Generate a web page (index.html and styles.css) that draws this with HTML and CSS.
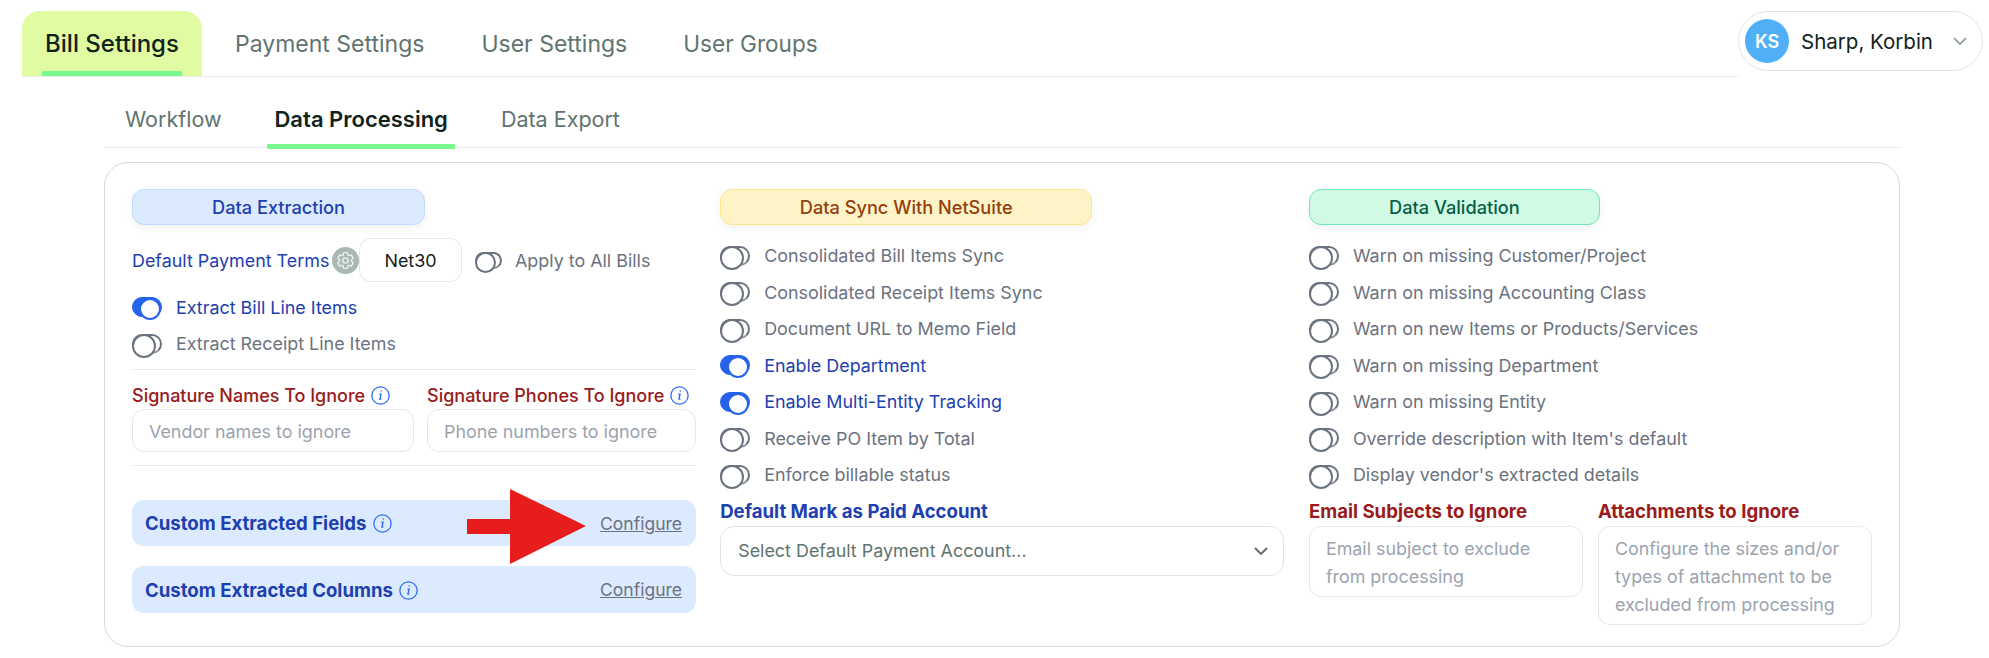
FILE: index.html
```html
<!DOCTYPE html>
<html lang="en">
<head>
  <meta charset="UTF-8">
  <meta name="viewport" content="width=device-width, initial-scale=1.0">
  <title>Bill Settings</title>
  <link rel="stylesheet" href="styles.css">
</head>
<body>
  <header class="topbar">
    <nav class="main-tabs">
      <a class="main-tab active">Bill Settings</a>
      <a class="main-tab">Payment Settings</a>
      <a class="main-tab">User Settings</a>
      <a class="main-tab">User Groups</a>
    </nav>
    <div class="user-chip">
      <span class="avatar">KS</span>
      <span class="user-name">Sharp, Korbin</span>
      <svg class="chevron" viewBox="0 0 14 8" width="14" height="8"><path d="M1 1l6 6 6-6" fill="none" stroke="#7d918c" stroke-width="1.5"/></svg>
    </div>
  </header>

  <main class="content">
    <nav class="sub-tabs">
      <a class="sub-tab">Workflow</a>
      <a class="sub-tab active">Data Processing</a>
      <a class="sub-tab">Data Export</a>
    </nav>

    <section class="card">
      <!-- Data extraction -->
      <div class="col">
        <h3 class="pill pill-blue">Data Extraction</h3>
        <div class="terms-row">
          <span class="terms-label">Default Payment Terms</span>
          <span class="gear">
            <svg viewBox="0 0 24 24" width="21" height="21" fill="none" stroke="#eef2f1" stroke-width="1.6" stroke-linejoin="round">
              <path d="M9.594 3.94c.09-.542.56-.94 1.11-.94h2.593c.55 0 1.02.398 1.11.94l.213 1.281c.063.374.313.686.645.87.074.04.147.083.22.127.325.196.72.257 1.075.124l1.217-.456a1.125 1.125 0 0 1 1.37.49l1.296 2.247a1.125 1.125 0 0 1-.26 1.431l-1.003.827c-.293.241-.438.613-.43.992a7.723 7.723 0 0 1 0 .255c-.008.378.137.75.43.991l1.004.827c.424.35.534.955.26 1.43l-1.298 2.247a1.125 1.125 0 0 1-1.369.491l-1.217-.456c-.355-.133-.75-.072-1.076.124a6.47 6.47 0 0 1-.22.128c-.331.183-.581.495-.644.869l-.213 1.281c-.09.543-.56.94-1.11.94h-2.594c-.55 0-1.019-.398-1.11-.94l-.213-1.281c-.062-.374-.312-.686-.644-.87a6.52 6.52 0 0 1-.22-.127c-.325-.196-.72-.257-1.076-.124l-1.217.456a1.125 1.125 0 0 1-1.369-.49l-1.297-2.247a1.125 1.125 0 0 1 .26-1.431l1.004-.827c.292-.24.437-.613.43-.991a6.932 6.932 0 0 1 0-.255c.007-.38-.138-.751-.43-.992l-1.004-.827a1.125 1.125 0 0 1-.26-1.43l1.297-2.247a1.125 1.125 0 0 1 1.37-.491l1.216.456c.356.133.751.072 1.076-.124.072-.044.146-.086.22-.128.332-.183.582-.495.644-.869l.214-1.28Z"/>
              <circle cx="12" cy="12" r="3"/>
            </svg>
          </span>
          <span class="terms-value">Net30</span>
          <span class="toggle small"></span>
          <span class="terms-apply">Apply to All Bills</span>
        </div>
        <div class="extract-rows">
          <div class="row on"><span class="toggle"></span>Extract Bill Line Items</div>
          <div class="row"><span class="toggle"></span>Extract Receipt Line Items</div>
        </div>
        <div class="signature-fields">
          <div class="field names">
            <label class="field-label">Signature Names To Ignore <svg class="info"><use href="#info"/></svg></label>
            <input class="text-input" placeholder="Vendor names to ignore">
          </div>
          <div class="field phones">
            <label class="field-label">Signature Phones To Ignore <svg class="info"><use href="#info"/></svg></label>
            <input class="text-input" placeholder="Phone numbers to ignore">
          </div>
        </div>
        <div class="custom-fields">
          <div class="custom-row">
            <span class="custom-title">Custom Extracted Fields <svg class="info"><use href="#info"/></svg></span>
            <a class="configure">Configure</a>
            <svg class="arrow" viewBox="0 0 119 75" width="119" height="75"><polygon points="0,30 43,30 43,0 119,37 43,75 43,45 0,45" fill="#e71d1d"/></svg>
          </div>
          <div class="custom-row tall">
            <span class="custom-title">Custom Extracted Columns <svg class="info"><use href="#info"/></svg></span>
            <a class="configure">Configure</a>
          </div>
        </div>
      </div>

      <!-- Sync -->
      <div class="col">
        <h3 class="pill pill-yellow">Data Sync With NetSuite</h3>
        <div class="toggle-list">
          <div class="row"><span class="toggle"></span>Consolidated Bill Items Sync</div>
          <div class="row"><span class="toggle"></span>Consolidated Receipt Items Sync</div>
          <div class="row"><span class="toggle"></span>Document URL to Memo Field</div>
          <div class="row on"><span class="toggle"></span>Enable Department</div>
          <div class="row on"><span class="toggle"></span>Enable Multi-Entity Tracking</div>
          <div class="row"><span class="toggle"></span>Receive PO Item by Total</div>
          <div class="row"><span class="toggle"></span>Enforce billable status</div>
        </div>
        <label class="bold-label blue">Default Mark as Paid Account</label>
        <div class="select-box">
          Select Default Payment Account...
          <svg viewBox="0 0 14 8" width="14" height="8"><path d="M1 1l6 6 6-6" fill="none" stroke="#5f7470" stroke-width="2"/></svg>
        </div>
      </div>

      <!-- Validation -->
      <div class="col">
        <h3 class="pill pill-green">Data Validation</h3>
        <div class="toggle-list">
          <div class="row"><span class="toggle"></span>Warn on missing Customer/Project</div>
          <div class="row"><span class="toggle"></span>Warn on missing Accounting Class</div>
          <div class="row"><span class="toggle"></span>Warn on new Items or Products/Services</div>
          <div class="row"><span class="toggle"></span>Warn on missing Department</div>
          <div class="row"><span class="toggle"></span>Warn on missing Entity</div>
          <div class="row"><span class="toggle"></span>Override description with Item's default</div>
          <div class="row"><span class="toggle"></span>Display vendor's extracted details</div>
        </div>
        <div class="ignore-fields">
          <div class="field">
            <label class="bold-label red">Email Subjects to Ignore</label>
            <div class="area-box">Email subject to exclude from processing</div>
          </div>
          <div class="field">
            <label class="bold-label red">Attachments to Ignore</label>
            <div class="area-box">Configure the sizes and/or types of attachment to be excluded from processing</div>
          </div>
        </div>
      </div>
    </section>
  </main>

  <svg width="0" height="0" class="defs">
    <symbol id="info" viewBox="0 0 18 18">
      <circle cx="9" cy="9" r="8.2" fill="none" stroke="#2f6bf0" stroke-width="1.2"/>
      <path d="M8 7.8h1.5l-1 4.6h1.4M9.2 4.7h1" fill="none" stroke="#2f6bf0" stroke-width="1.3"/>
    </symbol>
  </svg>
</body>
</html>
```

FILE: styles.css
```css
* {
  box-sizing: border-box;
}

body {
  margin: 0;
  font-family: Inter, "Liberation Sans", sans-serif;
  background: #fff;
  color: #6b7280;
  overflow: hidden;
}

.defs {
  position: absolute;
}

/* top bar */
.topbar {
  display: flex;
  align-items: flex-start;
  padding: 11px 6px 0 22px;
}

.main-tabs {
  flex: 1;
  display: flex;
  gap: 57px;
  height: 66px;
  border-bottom: 1px solid #e8ebea;
}

.main-tab {
  display: flex;
  align-items: center;
  height: 65px;
  font-size: 23px;
  color: #5f7470;
}

.main-tab:last-child {
  margin-left: -1px;
  font-size: 22.6px;
}

.main-tab.active {
  position: relative;
  justify-content: center;
  width: 180px;
  margin-right: -24px;
  background: #e1fba3;
  border-radius: 18px 18px 0 0;
  color: #10231b;
  font-size: 24px;
  font-weight: 500;
}

.main-tab.active::after {
  content: "";
  position: absolute;
  left: 20px;
  right: 20px;
  bottom: 0;
  height: 5px;
  background: #79f98d;
}

.user-chip {
  display: flex;
  align-items: center;
  width: 245px;
  height: 60px;
  padding: 0 15px 0 6px;
  border: 1px solid #e1e4e3;
  border-radius: 30px;
}

.avatar {
  width: 44px;
  height: 44px;
  border-radius: 50%;
  background: #4fb0f8;
  color: #fff;
  font-size: 18px;
  font-weight: 600;
  display: flex;
  align-items: center;
  justify-content: center;
}

.user-name {
  flex: 1;
  margin-left: 12px;
  font-size: 20.5px;
  color: #10231b;
}

/* sub tabs */
.content {
  margin: 0 89px 0 104px;
}

.sub-tabs {
  display: flex;
  height: 71px;
  padding-left: 21px;
  border-bottom: 1px solid #e8ebea;
}

.sub-tab {
  position: relative;
  display: flex;
  align-items: center;
  height: 71px;
  padding-top: 13px;
  font-size: 21.5px;
  color: #5f7470;
  margin-right: 53px;
}

.sub-tab.active {
  color: #10231b;
  font-size: 22px;
  font-weight: 600;
}

.sub-tab.active::after {
  content: "";
  position: absolute;
  left: -7px;
  right: -7px;
  bottom: -1px;
  height: 5px;
  background: #79f98d;
}

/* card */
.card {
  display: grid;
  grid-template-columns: 564px 564.5px 564px;
  column-gap: 24.2px;
  height: 485px;
  margin-top: 14px;
  padding: 26px 27px 0;
  border: 1px solid #d5dbd9;
  border-radius: 24px;
}

.col {
  font-size: 17.9px;
}

.pill {
  margin: 0;
  height: 36px;
  display: flex;
  align-items: center;
  justify-content: center;
  font-size: 18.2px;
  font-weight: 500;
  border: 1px solid;
  border-radius: 12px;
  box-shadow: 0 3px 8px rgba(0, 0, 0, 0.06);
}

.pill-blue {
  width: 293px;
  background: #dbeafe;
  border-color: #bfdbfe;
  color: #1e40af;
}

.pill-yellow {
  width: 372px;
  background: #fef3c7;
  border-color: #fde68a;
  color: #92400e;
}

.pill-green {
  width: 291px;
  background: #d1fae5;
  border-color: #6ee7b7;
  color: #065f46;
}

/* toggles */
.toggle {
  position: relative;
  flex: none;
  display: inline-block;
  width: 30px;
  height: 20px;
  margin-right: 14px;
  border-radius: 10px;
  background: #fff;
  border: 2px solid #6b7280;
  border-bottom-color: #8b929c;
}

.toggle::after {
  content: "";
  position: absolute;
  left: -2px;
  top: -2px;
  width: 20px;
  height: 20px;
  border-radius: 50%;
  background: #fff;
  border: 2px solid #6b7280;
}

.row.on .toggle {
  background: #2563eb;
  border: 1px solid #2563eb;
}

.row.on .toggle::after {
  left: auto;
  right: 0;
  top: 0;
  border: 2px solid #2563eb;
  width: 18px;
  height: 18px;
}

.toggle.small {
  width: 27px;
  height: 17px;
  margin: 0 13px 0 13px;
}

.toggle.small::after {
  width: 17px;
  height: 17px;
}

.row {
  display: flex;
  align-items: center;
  height: 36.5px;
  white-space: nowrap;
}

.row.on {
  color: #1e40af;
}

.toggle-list {
  margin-top: 12.5px;
}

/* first column */
.terms-row {
  display: flex;
  align-items: center;
  margin-top: 13px;
  height: 44px;
}

.terms-label {
  flex: none;
  width: 200px;
  color: #1e40af;
  white-space: nowrap;
}

.gear {
  flex: none;
  width: 27px;
  height: 27px;
  border-radius: 50%;
  background: #a9b8b3;
  display: flex;
  align-items: center;
  justify-content: center;
}

.terms-value {
  flex: none;
  width: 103px;
  height: 44px;
  display: flex;
  align-items: center;
  justify-content: center;
  border: 1px solid #e5e7eb;
  border-radius: 12px;
  color: #10231b;
}

.terms-apply {
  white-space: nowrap;
}

.extract-rows {
  margin-top: 7px;
  padding-bottom: 7px;
  border-bottom: 1px solid #e5e7eb;
}

.signature-fields {
  display: flex;
  gap: 13px;
  margin-top: 11px;
  padding-bottom: 13px;
  border-bottom: 1px solid #e5e7eb;
}

.field-label {
  display: flex;
  align-items: center;
  gap: 6px;
  height: 28px;
  color: #991b1b;
  font-size: 18px;
  font-weight: 500;
  white-space: nowrap;
}

.names {
  width: 282px;
}

.phones {
  width: 269px;
}

.info {
  width: 19px;
  height: 19px;
  vertical-align: -3px;
}

.custom-title .info {
  margin-left: 2px;
}

.text-input {
  width: 100%;
  height: 43px;
  padding: 2px 16px 0;
  border: 1px solid #e5e7eb;
  border-radius: 12px;
  font: 17.9px Inter, "Liberation Sans", sans-serif;
}

.text-input::placeholder {
  color: #9ca3af;
}

.custom-fields {
  display: flex;
  flex-direction: column;
  gap: 20px;
  margin-top: 34px;
}

.custom-row {
  position: relative;
  display: flex;
  align-items: center;
  justify-content: space-between;
  height: 46px;
  padding: 0 14px 0 13px;
  background: #dbeafe;
  border-radius: 12px;
}

.custom-row.tall {
  height: 47px;
}

.custom-title {
  color: #1e40af;
  font-size: 18.6px;
  font-weight: 700;
}

.configure {
  color: #6b7280;
  font-size: 17.5px;
  text-decoration: underline;
}

.arrow {
  position: absolute;
  left: 335px;
  top: -11px;
}

/* labels and boxes in lower half */
.bold-label {
  display: block;
  font-size: 18.6px;
  font-weight: 700;
  line-height: 24px;
  white-space: nowrap;
}

.bold-label.blue {
  margin-top: 5.5px;
  color: #1e40af;
}

.bold-label.red {
  color: #991b1b;
}

.select-box {
  display: flex;
  align-items: center;
  justify-content: space-between;
  height: 50px;
  margin-top: 3px;
  margin-right: 1px;
  padding: 0 15px 0 17px;
  border: 1px solid #e1e4e3;
  border-radius: 14px;
  color: #5f7470;
}

.ignore-fields {
  display: grid;
  grid-template-columns: 274px 274px;
  gap: 15px;
  margin-top: 5.5px;
  align-items: start;
}

.area-box {
  margin-top: 3px;
  padding: 8px 16px 5px;
  border: 1px solid #e5e7eb;
  border-radius: 12px;
  color: #9ca3af;
  line-height: 28px;
}
```
